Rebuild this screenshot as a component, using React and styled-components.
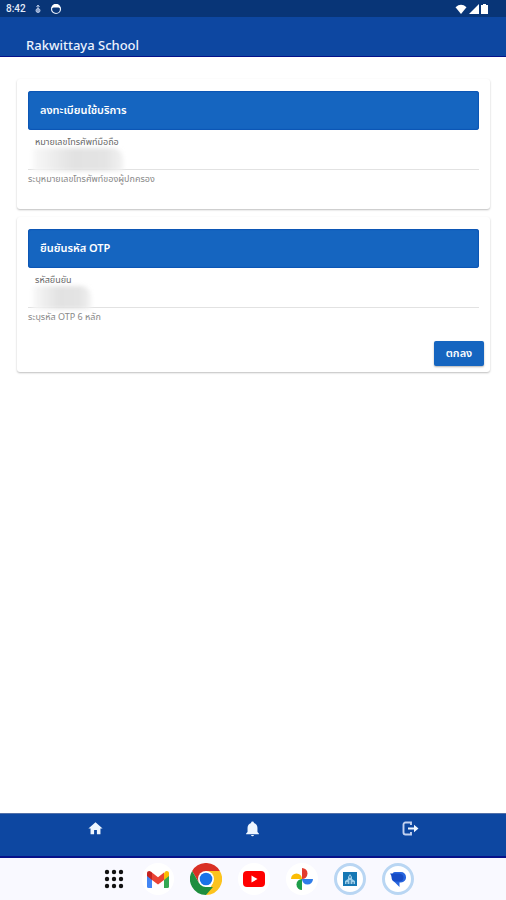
import styled, { createGlobalStyle } from "styled-components";

export default function App() {
  return (
    <Page>
      <GlobalStyle />
      <StatusBar>
        <StatusGroup>
          <Clock>8:42</Clock>
          <svg width="8" height="10" viewBox="0 0 8 10" fill="none" stroke="#b4c5e2">
            <circle cx="4" cy="6.500" r="2" fill="#8fa6cf" />
            <path d="M4 1v4M2.500 3 4 1l1.500 2" />
          </svg>
          <svg width="12" height="12" viewBox="0 0 12 12">
            <circle cx="6" cy="6" r="4.500" fill="none" stroke="#e8effa" strokeWidth="1.200" />
            <path d="M1.500 5.500a4.500 4.500 0 0 1 9 0L8.500 4.500h-5z" fill="#fff" />
          </svg>
        </StatusGroup>
        <SignalGroup>
          <svg width="12" height="10" viewBox="0 0 12 10" fill="#fff">
            <path d="M6 10 .5 3.200Q6-1.600 11.500 3.200z" />
          </svg>
          <svg width="10" height="10" viewBox="0 0 10 10" fill="#fff">
            <path d="M10 0v10H0z" />
          </svg>
          <svg width="7" height="10" viewBox="0 0 7 10" fill="#fff">
            <path d="M2 0h3v1h2v9H0V1h2z" />
          </svg>
        </SignalGroup>
      </StatusBar>
      <AppBar>
        <Title>Rakwittaya School</Title>
      </AppBar>
      <Main>
        <Card>
          <Banner>ลงทะเบียนใช้บริการ</Banner>
          <Field
            id="phone"
            label="หมายเลขโทรศัพท์มือถือ"
            hint="ระบุหมายเลขโทรศัพท์ของผู้ปกครอง"
            maskWidth={90}
          />
        </Card>
        <Card>
          <Banner>ยืนยันรหัส OTP</Banner>
          <Field
            id="otp"
            label="รหัสยืนยัน"
            hint="ระบุรหัส OTP 6 หลัก"
            maskWidth={58}
          />
          <Actions>
            <Submit type="button">ตกลง</Submit>
          </Actions>
        </Card>
      </Main>
      <Nav>
        <NavButton type="button" aria-label="Home">
          <svg width="17" height="17" viewBox="0 0 24 24">
            <path d="M10 20v-6h4v6h5v-8h3L12 3 2 12h3v8z" />
          </svg>
        </NavButton>
        <NavButton type="button" aria-label="Notifications">
          <svg width="17" height="17" viewBox="0 0 24 24">
            <path d="M21 19v1H3v-1l2-2v-6c0-3.100 2.030-5.830 5-6.710V4a2 2 0 0 1 4 0v.29c2.970.88 5 3.610 5 6.710v6zM14 21a2 2 0 0 1-4 0" />
          </svg>
        </NavButton>
        <NavButton type="button" aria-label="Logout">
          <svg width="17" height="17" viewBox="0 0 17 17">
            <path
              d="M9 5V2.500H3.500a2 2 0 0 0-2 2v8a2 2 0 0 0 2 2H9V12"
              fill="none"
              stroke="#c3d2f0"
              strokeWidth="1.900"
            />
            <path d="M6 7.500h6V4.800l4.500 3.700-4.500 3.700V9.500H6z" />
          </svg>
        </NavButton>
      </Nav>
      <Dock>
        <DockButton type="button" aria-label="All apps" $plain>
          <svg width="20" height="20" viewBox="0 0 20 20" fill="#111">
            {[3, 10, 17].map((y) =>
              [3, 10, 17].map((x) => <circle key={`${x}-${y}`} cx={x} cy={y} r="2.200" />)
            )}
          </svg>
        </DockButton>
        <DockButton type="button" aria-label="Gmail">
          <svg width="22" height="17" viewBox="0 0 22 17">
            <path d="M0 3v12.500Q0 17 1.500 17H5V6z" fill="#4285f4" />
            <path d="M22 3v12.500q0 1.500-1.500 1.500H17V6z" fill="#34a853" />
            <path d="M17 2.200V9l5-4V2.500C22 0 19.500-.5 18 .8z" fill="#fbbc04" />
            <path d="M4 .8l7 5.400 6-4.600V9l-6 4.500L5 9z" fill="#ea4335" />
            <path d="M0 2.500C0 0 2.500-.5 4 .8l1 1V9L0 5z" fill="#c5221f" />
          </svg>
        </DockButton>
        <DockButton type="button" aria-label="Chrome">
          <svg width="32" height="32" viewBox="0 0 48 48">
            <path d="M24 12h20.800A24 24 0 0 1 24 48l10.400-18z" fill="#fcc31e" />
            <path d="M3.200 12A24 24 0 0 1 44.800 12H24L13.600 30z" fill="#d93025" />
            <path d="M3.200 12 13.600 30 24 36h10.400L24 48A24 24 0 0 1 3.200 12z" fill="#1e8e3e" />
            <circle cx="24" cy="24" r="12" fill="#fff" />
            <circle cx="24" cy="24" r="9.500" fill="#1a73e8" />
          </svg>
        </DockButton>
        <DockButton type="button" aria-label="YouTube">
          <svg width="22" height="16" viewBox="0 0 22 16">
            <rect width="22" height="16" rx="4" fill="#f00" />
            <path d="m8.500 4.500 6 3.500-6 3.500z" fill="#fff" />
          </svg>
        </DockButton>
        <DockButton type="button" aria-label="Photos">
          <svg width="24" height="24" viewBox="0 0 24 24">
            <path d="M12 1a5.500 5.500 0 0 1 0 11z" fill="#e33b2e" />
            <path d="M23 12a5.500 5.500 0 0 1-11 0z" fill="#2f7de9" />
            <path d="M12 23a5.500 5.500 0 0 1 0-11z" fill="#1e9e4a" />
            <path d="M1 12a5.500 5.500 0 0 1 11 0z" fill="#fbbc04" />
          </svg>
        </DockButton>
        <DockButton type="button" aria-label="School" $ring>
          <svg width="14" height="14" viewBox="0 0 14 14">
            <rect width="14" height="14" fill="#1678b4" />
            <path d="M7 2 9 5v2l3 2v3H2V9l3-2V5z" fill="#9fd0ea" />
            <path d="M4 12v-2M7 12V8M10 12v-2M6 5h2" stroke="#1a6499" />
          </svg>
        </DockButton>
        <DockButton type="button" aria-label="Messages" $ring>
          <svg width="16" height="15" viewBox="0 0 16 15">
            <path d="M5 0h6a5 5 0 0 1 5 5 5 5 0 0 1-5 5.500H9.500V15L5 10.500Q2 9 2 5q0-5 3-5z" fill="#2866de" />
            <path d="M0 1.500h9Q13.500 2 13.500 5.500T10 9.500H6Q1.500 9.500 1.500 5 1.500 3 0 1.500z" fill="#174cc6" />
          </svg>
        </DockButton>
      </Dock>
    </Page>
  );
}

function Field({ id, label, hint, maskWidth }) {
  return (
    <FieldBox>
      <Label htmlFor={id}>{label}</Label>
      <InputWrap>
        <Input id={id} type="text" aria-describedby={`${id}-hint`} />
        <Mask $width={maskWidth} />
      </InputWrap>
      <Hint id={`${id}-hint`}>{hint}</Hint>
    </FieldBox>
  );
}

const GlobalStyle = createGlobalStyle`
  * {
    box-sizing: border-box;
  }
  body {
    margin: 0;
    background: #fff;
    font-family: "Noto Sans", "Noto Sans Thai", sans-serif;
  }
  svg {
    display: block;
  }
`;

const Page = styled.div`
  display: flex;
  flex-direction: column;
  min-height: 100vh;
`;

const StatusBar = styled.div`
  display: flex;
  justify-content: space-between;
  align-items: center;
  height: 17px;
  padding: 0 18px 0 6px;
  background: #083577;
`;

const StatusGroup = styled.div`
  display: flex;
  align-items: center;
  gap: 8px;
`;

const SignalGroup = styled.div`
  display: flex;
  align-items: center;
  gap: 2px;
`;

const Clock = styled.span`
  color: #e3ebf8;
  font-family: Roboto, sans-serif;
  font-size: 10px;
  font-weight: 500;
  line-height: 16px;
`;

const AppBar = styled.header`
  display: flex;
  align-items: flex-end;
  height: 40px;
  padding: 0 26px 2px;
  background: #0d47a1;
  border-bottom: 1px solid #06128a;
`;

const Title = styled.h1`
  margin: 0;
  color: #eaf1fd;
  font-size: 13px;
  font-weight: 500;
  line-height: 18px;
`;

const Main = styled.main`
  display: flex;
  flex: 1;
  flex-direction: column;
  gap: 8px;
  padding: 22px 16px 24px 17px;
`;

const Card = styled.section`
  padding: 12px 11px 24px;
  border-radius: 3px;
  background: #fff;
  box-shadow: 0 1px 2px rgba(0, 0, 0, 0.26);
`;

const Banner = styled.h2`
  display: flex;
  align-items: center;
  height: 39px;
  margin: 0;
  padding: 0 12px;
  border-radius: 3px;
  background: #1565c0;
  box-shadow: inset 0 0 1px 1px #0c55b4;
  color: #fff;
  font-size: 11px;
  font-weight: 600;
`;

const FieldBox = styled.div`
  display: flex;
  flex-direction: column;
`;

const Label = styled.label`
  padding: 6px 7px 0;
  color: #666;
  font-size: 9px;
  line-height: 12px;
`;

const InputWrap = styled.div`
  position: relative;
  display: flex;
`;

const Input = styled.input`
  width: 100%;
  height: 22px;
  padding: 0 7px;
  border: 0;
  border-bottom: 1px solid #e2e2e2;
  outline: 0;
  background: transparent;
  font: inherit;
  font-size: 12px;
`;

const Mask = styled.span`
  position: absolute;
  top: 0;
  left: 5px;
  width: ${({ $width }) => $width}px;
  height: 23px;
  border-radius: 4px 10px 2px 2px;
  background: linear-gradient(90deg, #f8f8f8, #e2e2e2 45%, #e4e4e4 80%, #f2f2f2);
  filter: blur(2px);
  pointer-events: none;
`;

const Hint = styled.p`
  margin: 3px 0 0;
  color: #888;
  font-size: 9px;
  line-height: 12px;
`;

const Actions = styled.div`
  display: flex;
  justify-content: flex-end;
  margin: 18px -5px -18px 0;
`;

const Submit = styled.button`
  width: 50px;
  height: 25px;
  padding: 0;
  border: 0;
  border-radius: 2px;
  background: #1565c0;
  box-shadow: 0 1px 2px rgba(0, 0, 0, 0.3);
  color: #fff;
  font: inherit;
  font-size: 11px;
  font-weight: 600;
  cursor: pointer;
`;

const Nav = styled.nav`
  display: flex;
  justify-content: space-around;
  height: 45px;
  padding: 0 17px;
  border-top: 1px solid #5270a8;
  border-bottom: 2px solid #06128a;
  background: #0d47a1;
`;

const NavButton = styled.button`
  display: flex;
  flex: 1;
  justify-content: center;
  padding: 6px 0 0;
  border: 0;
  background: transparent;
  cursor: pointer;
  svg {
    fill: #eef6ff;
  }
`;

const Dock = styled.div`
  display: flex;
  justify-content: center;
  align-items: center;
  gap: 16px;
  height: 42px;
  padding-left: 9px;
  background: #f9f9ff;
`;

const DockButton = styled.button`
  display: flex;
  justify-content: center;
  align-items: center;
  width: ${({ $plain }) => ($plain ? "24px" : "32px")};
  height: 32px;
  padding: 0;
  border: ${({ $ring }) => ($ring ? "3px solid #b9d6f3" : "0")};
  border-radius: 50%;
  background: ${({ $plain }) => ($plain ? "transparent" : "#fff")};
  cursor: pointer;
`;
